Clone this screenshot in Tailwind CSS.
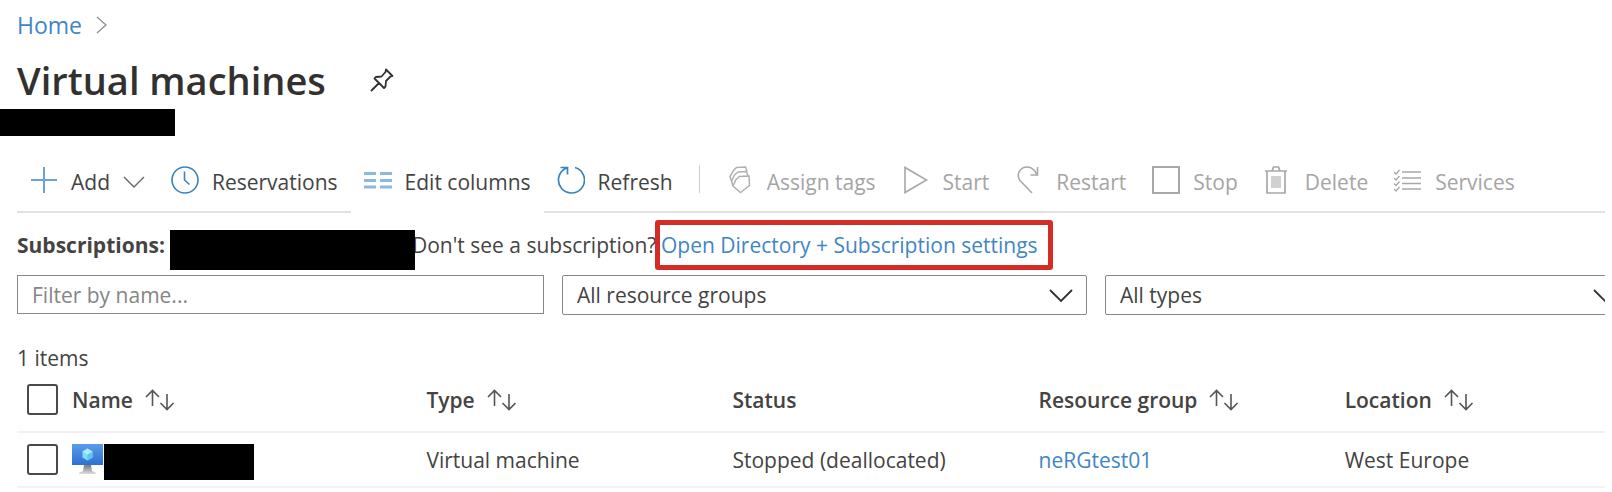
<!DOCTYPE html>
<html lang="en">
<head>
    <meta charset="UTF-8">
    <meta name="viewport" content="width=device-width, initial-scale=1.0">
    <title>Virtual machines</title>
    <script src="https://cdn.jsdelivr.net/npm/@tailwindcss/browser@4"></script>
</head>
<body class="bg-white text-[#444342] font-['Open_Sans','Noto_Sans',sans-serif] text-[21px] leading-7 overflow-hidden">
<header>
    <nav class="flex items-center gap-[14px] pl-[17px] pt-[11px]">
        <a href="#" class="text-[23px] text-[#3f86c6]">Home</a>
        <svg class="w-3 h-5" viewBox="0 0 12 20" fill="none" stroke="#8f8f8f" stroke-width="1.3"><path d="M1 2l9 8-9 8"/></svg>
    </nav>
    <div class="flex items-center gap-11 pl-[17px] pt-4 pb-1">
        <h1 class="text-[38px] leading-[50px] font-semibold text-[#323130]">Virtual machines</h1>
        <button type="button" aria-label="Pin to dashboard">
            <svg class="w-6 h-6" viewBox="0 0 24 24" fill="none" stroke="#323130" stroke-width="1.8" stroke-linejoin="round"><path d="M16 1.500l6.500 6.500-2 .5-4.500 4.500-.5 5.500-1.500 1.500-9.500-9.500L6 9l5.500-.5L15.500 4zM9 15l-8 8"/></svg>
        </button>
    </div>
    <div class="w-[175px] h-[27px] bg-black"></div>
</header>

<main class="pl-[17px] mr-[7px] overflow-hidden">
    <div class="flex items-center h-[76px] mt-px border-b-2 border-[#e1e1e1] whitespace-nowrap">
        <button type="button" class="flex items-center gap-[13px] h-[76px] px-[13px] pt-[11px]">
            <svg class="w-7 h-7" viewBox="0 0 28 28" fill="none" stroke="#6ba4d4" stroke-width="2"><path d="M1 14h26M14 1v26"/></svg>
            <span class="pt-1">Add</span>
            <svg class="w-[22px] h-4" viewBox="0 0 22 16" fill="none" stroke="#666" stroke-width="1.4"><path d="M1 5l10 10L21 5"/></svg>
        </button>
        <button type="button" class="flex items-center gap-[13px] h-[76px] px-[13px] pt-[11px]">
            <svg class="w-7 h-7" viewBox="0 0 28 28" fill="none" stroke="#3a83bf" stroke-width="1.6"><circle cx="14" cy="14" r="13"/><path d="M13.500 5.500v8.500l5 4.500"/></svg>
            <span class="pt-1">Reservations</span>
        </button>
        <button type="button" class="flex items-center gap-[13px] h-[78px] px-[13px] pt-[11px] bg-white">
            <svg class="w-7 h-7" viewBox="0 0 28 28" fill="#8db8e0"><path d="M0 6h12v3H0zM16 6h12v3H16zM0 13h12v3H0zM16 13h12v3H16zM0 19.500h12v3H0zM16 19.500h12v3H16z"/></svg>
            <span class="pt-1">Edit columns</span>
        </button>
        <button type="button" class="flex items-center gap-[13px] h-[76px] px-[13px] pt-[11px]">
            <svg class="w-7 h-7" viewBox="0 0 28 28" fill="none" stroke="#3a83bf" stroke-width="1.7"><path d="M18 1.500A13 13 0 1 1 9.500 2M3.500 1.500H10.500V8.500"/></svg>
            <span class="pt-1">Refresh</span>
        </button>
        <div class="w-px h-7 mt-[10px] mx-[13px] bg-[#cfcfcf]"></div>
        <button type="button" disabled class="flex items-center gap-[13px] h-[76px] px-[13px] pt-[11px] text-[#a5a5a5]">
            <svg class="w-7 h-7" viewBox="0 0 28 28" fill="none" stroke="#b0b0b0" stroke-width="1.5"><path d="M5.500 15L4 10.500 7.500 4.500 10.500 1.500 19.500 1l1.500 4.500"/><path d="M7 20l-1.500-5L8.500 9l3.500-3 8.500-.5 1.500 4.500"/><path d="M7 20l3-6.500 3.500-3 9.500-.5.500 9.500-9 7z"/></svg>
            <span class="pt-1">Assign tags</span>
        </button>
        <button type="button" disabled class="flex items-center gap-[13px] h-[76px] px-[13px] pt-[11px] text-[#a5a5a5]">
            <svg class="w-7 h-7" viewBox="0 0 28 28" fill="none" stroke="#a8a8a8" stroke-width="1.6"><path d="M3 1.500v25L24.500 14z"/></svg>
            <span class="pt-1">Start</span>
        </button>
        <button type="button" disabled class="flex items-center gap-[13px] h-[76px] px-[13px] pt-[11px] text-[#a5a5a5]">
            <svg class="w-7 h-7" viewBox="0 0 28 28" fill="none" stroke="#a8a8a8" stroke-width="1.6"><path d="M17 27L5 14.500C.500 8 5.500 1 12 1c5 0 8 3 10 8M22.500 1v8h-7"/></svg>
            <span class="pt-1">Restart</span>
        </button>
        <button type="button" disabled class="flex items-center gap-[13px] h-[76px] px-[13px] pt-[11px] text-[#a5a5a5]">
            <svg class="w-7 h-7" viewBox="0 0 28 28" fill="none" stroke="#a8a8a8" stroke-width="2"><path d="M1 1h26v26H1z"/></svg>
            <span class="pt-1">Stop</span>
        </button>
        <button type="button" disabled class="flex items-center gap-[13px] h-[76px] px-[13px] pt-[11px] text-[#a5a5a5]">
            <svg class="w-7 h-7" viewBox="0 0 28 28" fill="none" stroke="#a8a8a8" stroke-width="1.7"><path d="M1 5h22M3 5v22h18V5M8 5l1.500-4h5L16 5"/><path d="M7 10h10v12H7z" fill="#d0d0d0" stroke="none"/></svg>
            <span class="pt-1">Delete</span>
        </button>
        <button type="button" disabled class="flex items-center gap-[13px] h-[76px] px-[13px] pt-[11px] text-[#a5a5a5]">
            <svg class="w-7 h-7" viewBox="0 0 28 28" fill="none" stroke="#a8a8a8" stroke-width="1.7"><path d="M8 6h19M8 12h19M8 17.500h19M8 23h19"/><path d="M0 6l2 2 3.500-4M0 12l2 2 3.500-4M0 17.500l2 2 3.500-4M0 23l2 2 3.500-4" stroke-width="1.300"/></svg>
            <span class="pt-1">Services</span>
        </button>
    </div>

    <div class="flex items-center h-[50px] mt-[7px] whitespace-nowrap">
        <strong class="w-[153px] font-bold">Subscriptions:</strong>
        <span class="relative z-10 w-[245px] h-10 mt-[10px] bg-black"></span>
        <span class="w-[243px] -ml-[3px]">Don't see a subscription?</span>
        <a href="#" class="flex items-center h-[50px] w-[398px] px-px border-5 border-[#d42d25] rounded-[3px] text-[#3f86c6]">Open Directory + Subscription settings</a>
    </div>

    <div class="grid grid-cols-[527fr_525fr_526fr] items-start gap-[18px] mt-[5px] -mr-[26px]">
        <input type="text" aria-label="Filter by name" placeholder="Filter by name..." class="h-[39px] min-w-0 px-[14px] border border-[#8a8886] placeholder:text-[#858585]">
        <div class="relative">
            <select aria-label="Resource groups" class="appearance-none w-full h-10 px-[14px] border border-[#8a8886] rounded-[2px]">
                <option>All resource groups</option>
            </select>
            <svg class="absolute right-[14px] top-[14px] w-6 h-[14px] pointer-events-none" viewBox="0 0 24 14" fill="none" stroke="#323130" stroke-width="1.8"><path d="M1 1l11 11L23 1"/></svg>
        </div>
        <div class="relative">
            <select aria-label="Types" class="appearance-none w-full h-10 px-[14px] border border-[#8a8886] rounded-[2px]">
                <option>All types</option>
            </select>
            <svg class="absolute right-[14px] top-[14px] w-6 h-[14px] pointer-events-none" viewBox="0 0 24 14" fill="none" stroke="#323130" stroke-width="1.8"><path d="M1 1l11 11L23 1"/></svg>
        </div>
    </div>

    <p class="mt-[29px]">1 items</p>

    <table class="w-[calc(100%+23px)] table-fixed text-left">
        <thead>
        <tr class="h-[60px] border-b-2 border-[#f0f0f0]">
            <th class="w-[55px] pl-[10px] pb-1"><input type="checkbox" aria-label="Select all" class="block appearance-none w-[31px] h-[31px] border-2 border-[#4a4a4a] rounded-[3px]"></th>
            <th class="w-[22%] pb-1 font-semibold">
                <button type="button" class="flex items-center gap-3">Name
                    <svg class="w-[30px] h-[22px]" viewBox="0 0 30 22" fill="none" stroke="#555" stroke-width="1.6"><path d="M7.500 17V2M1 8l6.500-6.500L14 8M22 5v15M15.500 14l6.500 6.500 6.500-6.500"/></svg>
                </button>
            </th>
            <th class="w-[19%] pb-1 font-semibold">
                <button type="button" class="flex items-center gap-3">Type
                    <svg class="w-[30px] h-[22px]" viewBox="0 0 30 22" fill="none" stroke="#555" stroke-width="1.6"><path d="M7.500 17V2M1 8l6.500-6.500L14 8M22 5v15M15.500 14l6.500 6.500 6.500-6.500"/></svg>
                </button>
            </th>
            <th class="w-[19%] pb-1 font-semibold">Status</th>
            <th class="w-[19%] pb-1 font-semibold">
                <button type="button" class="flex items-center gap-3">Resource group
                    <svg class="w-[30px] h-[22px]" viewBox="0 0 30 22" fill="none" stroke="#555" stroke-width="1.6"><path d="M7.500 17V2M1 8l6.500-6.500L14 8M22 5v15M15.500 14l6.500 6.500 6.500-6.500"/></svg>
                </button>
            </th>
            <th class="pb-1 font-semibold">
                <button type="button" class="flex items-center gap-3">Location
                    <svg class="w-[30px] h-[22px]" viewBox="0 0 30 22" fill="none" stroke="#555" stroke-width="1.6"><path d="M7.500 17V2M1 8l6.500-6.500L14 8M22 5v15M15.500 14l6.500 6.500 6.500-6.500"/></svg>
                </button>
            </th>
        </tr>
        </thead>
        <tbody>
        <tr class="h-[55px] border-b-2 border-[#f3f3f3]">
            <td class="pl-[10px]"><input type="checkbox" aria-label="Select virtual machine" class="block appearance-none w-[31px] h-[31px] border-2 border-[#4a4a4a] rounded-[3px]"></td>
            <td class="pt-1">
                <div class="flex items-start gap-px">
                    <svg class="w-[31px] h-[30px]" viewBox="0 0 31 30">
                        <defs>
                            <linearGradient id="screen" x1="0" y1="0" x2="0" y2="1"><stop offset="0" stop-color="#5a9cec"/><stop offset="1" stop-color="#2f70cf"/></linearGradient>
                            <linearGradient id="stand" x1="0" y1="0" x2="0" y2="1"><stop offset="0" stop-color="#777"/><stop offset="1" stop-color="#ddd"/></linearGradient>
                        </defs>
                        <path d="M0 0h31v21H0z" fill="url(#screen)"/>
                        <path d="M12 21h7l1 6 4 2v1H7v-1l4-2z" fill="url(#stand)"/>
                        <path d="M15.500 4.500l5 3v6l-5 3-5-3v-6z" fill="#7fdcf7"/>
                        <path d="M15.500 10.500l5-3v6l-5 3z" fill="#5fc4ee"/>
                        <path d="M15.500 4.500l5 3-5 3-5-3z" fill="#a9ecfb"/>
                    </svg>
                    <span class="w-[150px] h-9 bg-black"></span>
                </div>
            </td>
            <td>Virtual machine</td>
            <td>Stopped (deallocated)</td>
            <td><a href="#" class="text-[#3f86c6]">neRGtest01</a></td>
            <td>West Europe</td>
        </tr>
        </tbody>
    </table>
</main>
</body>
</html>
